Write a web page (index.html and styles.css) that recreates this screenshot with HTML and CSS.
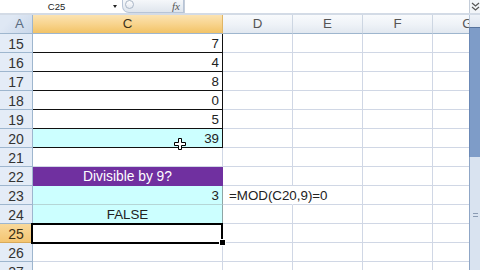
FILE: index.html
```html
<!DOCTYPE html>
<html>
<head>
<meta charset="utf-8">
<link rel="stylesheet" href="styles.css">
</head>
<body>
<div class="app">
  <div class="fbar">
    <div class="namebox"><span class="name">C25</span><span class="dd"></span></div>
    <div class="fxbox"><span class="knob"></span><span class="fx">fx</span></div>
    <div class="input"></div>
    <div class="expand">
      <svg width="9" height="10" viewBox="0 0 9 10"><polyline points="1,1 4.5,4 8,1" fill="none" stroke="#555" stroke-width="1.2"/><polyline points="1,5 4.5,8 8,5" fill="none" stroke="#555" stroke-width="1.2"/></svg>
    </div>
  </div>
  <div class="sheet">
    <div class="grid">
      <div class="corner">A</div><div class="ch sel">C</div><div class="ch">D</div><div class="ch">E</div><div class="ch">F</div><div class="ch">G</div>

      <div class="rh">15</div><div class="c cb num">7</div><div class="c"></div><div class="c"></div><div class="c"></div><div class="c"></div>
      <div class="rh">16</div><div class="c cb num">4</div><div class="c"></div><div class="c"></div><div class="c"></div><div class="c"></div>
      <div class="rh">17</div><div class="c cb num">8</div><div class="c"></div><div class="c"></div><div class="c"></div><div class="c"></div>
      <div class="rh">18</div><div class="c cb num">0</div><div class="c"></div><div class="c"></div><div class="c"></div><div class="c"></div>
      <div class="rh">19</div><div class="c cb num">5</div><div class="c"></div><div class="c"></div><div class="c"></div><div class="c"></div>
      <div class="rh">20</div><div class="c cb cyan num total">39<svg class="cursor" width="12" height="12" viewBox="0 0 12 12"><polygon points="4.5,0.5 7.5,0.5 7.5,4.5 11.5,4.5 11.5,7.5 7.5,7.5 7.5,11.5 4.5,11.5 4.5,7.5 0.5,7.5 0.5,4.5 4.5,4.5" fill="#fff" stroke="#000" stroke-width="1"/></svg></div><div class="c"></div><div class="c"></div><div class="c"></div><div class="c"></div>
      <div class="rh">21</div><div class="c"></div><div class="c"></div><div class="c"></div><div class="c"></div><div class="c"></div>
      <div class="rh">22</div><div class="c purple ctr">Divisible by 9?</div><div class="c"></div><div class="c"></div><div class="c"></div><div class="c"></div>
      <div class="rh">23</div><div class="c cyan cy num">3</div><div class="c ovf">=MOD(C20,9)=0</div><div class="c"></div><div class="c"></div><div class="c"></div>
      <div class="rh">24</div><div class="c cyan cy ctr">FALSE</div><div class="c"></div><div class="c"></div><div class="c"></div><div class="c"></div>
      <div class="rh sel">25</div><div class="c active"></div><div class="c"></div><div class="c"></div><div class="c"></div><div class="c"></div>
      <div class="rh">26</div><div class="c"></div><div class="c"></div><div class="c"></div><div class="c"></div><div class="c"></div>
      <div class="rh">27</div><div class="c"></div><div class="c"></div><div class="c"></div><div class="c"></div><div class="c"></div>
    </div>
    <div class="vscroll">
      <div class="vs-top"></div>
      <div class="vs-thumb"></div>
      <div class="vs-track"><span class="grip"></span></div>
    </div>
  </div>
</div>
</body>
</html>
```
FILE: styles.css
```css
* { box-sizing: border-box; margin: 0; padding: 0; }
html, body { width: 480px; height: 270px; overflow: hidden; background: #fff; }
body { font-family: "Liberation Sans", Arial, sans-serif; color: #222; }

.app { display: flex; flex-direction: column; height: 270px; }

/* formula bar */
.fbar { display: flex; height: 15px; flex: none; background: #fff; border-bottom: 2px solid #d3dbe6; }
.namebox { width: 119px; display: flex; align-items: center; font-size: 9.5px; color: #222; }
.name { flex: 1; text-align: center; line-height: 12px; }
.dd { width: 0; height: 0; margin: 0 2px 0 0; border-top: 3px solid #222; border-left: 2.5px solid transparent; border-right: 2.5px solid transparent; }
.fxbox { width: 62px; margin-left: 3px; height: 13px; display: flex; align-items: center; justify-content: space-between; padding: 0 3px 0 2px;
  border: 1px solid #b7c4d6; border-top: none; border-radius: 0 0 0 7px; background: linear-gradient(#f5f7fa, #dfe5ed); }
.knob { width: 9px; height: 9px; border-radius: 50%; border: 1px solid #a9b6c7; background: linear-gradient(#fdfdfe, #e4e9f0); margin-top: -3px; }
.fx { font-family: "Liberation Serif", serif; font-style: italic; font-size: 11px; color: #555; line-height: 12px; }
.input { flex: 1; border-left: 1px solid #c4cdd9; }
.expand { width: 11px; display: flex; align-items: center; justify-content: center; background: #f2f5f9; border-left: 1px solid #c4cdd9; }

/* sheet */
.sheet { flex: 1; display: flex; overflow: hidden; }
.grid { width: 469px; flex: none; display: grid; grid-template-columns: 33px 190px 70px 70px 70px 70px; grid-auto-rows: 19px; align-content: start; overflow: hidden; }

.corner, .ch, .rh, .c { font-size: 13.33px; white-space: nowrap; border-right: 1px solid #d0d7e5; border-bottom: 1px solid #d0d7e5; }

.corner { background: linear-gradient(135deg, #dfe8f4 0 30%, #c9d7ea 100%); border-right-color: #9eb6ce; border-bottom-color: #9eb6ce; color: #5a6b80; padding-left: 15px; line-height: 18px; }
.ch { background: linear-gradient(#f8fafc 0%, #eef2f7 55%, #e2e8f0 100%); border-right-color: #cdd6e2; border-bottom-color: #9eb6ce; text-align: center; line-height: 18px; color: #555; }
.ch.sel { background: linear-gradient(#fbe3b2 0%, #f8d48e 50%, #f2c366 100%); border-right-color: #e0b565; color: #3d321a; }

.rh { background: #e4ecf7; border-right-color: #9eb6ce; border-bottom-color: #9eb6ce; text-align: center; font-size: 14px; line-height: 16px; padding-top: 2px; color: #333; }
.rh.sel { background: linear-gradient(#f9d99b, #f4c572); border-bottom-color: #d9aa5a; color: #3b2f14; }

.c { line-height: 16px; padding: 2px 3px 0 3px; overflow: hidden; }
.num { text-align: right; }
.ctr { text-align: center; }
.cb { border-right-color: #111; border-bottom-color: #111; }
.cyan { background: #ccffff; }
.cy { border-right-color: #8fa5a5; border-bottom-color: #b5d6d6; }
.purple { background: #7030a0; color: #fff; border-right-color: #7030a0; border-bottom-color: #7030a0; font-size: 13.8px; }
.ovf { overflow: visible; border-right-color: transparent; position: relative; z-index: 1; padding-left: 6px; }

.total { position: relative; overflow: visible; }
.cursor { position: absolute; left: 141px; top: 9px; z-index: 3; }

.active { position: relative; overflow: visible; }
.active::before { content: ""; position: absolute; left: -2px; top: -1px; right: -1px; bottom: -2px; border: 2px solid #000; z-index: 2; }
.active::after { content: ""; position: absolute; right: -4px; bottom: -4px; width: 5px; height: 5px; background: #000; border: 1px solid #fff; z-index: 3; }

/* scrollbar */
.vscroll { width: 11px; flex: none; display: flex; flex-direction: column; }
.vs-top { height: 12px; background: linear-gradient(#eef2f8, #dde5f0); border-left: 1px solid #b9c8dc; }
.vs-thumb { height: 130px; background: #7e9cc8; border-left: 1px solid #6b89b6; border-top: 1px solid #57739d; }
.vs-track { flex: 1; background: #d9e3f0; border-left: 1px solid #8fa6c6; display: flex; justify-content: center; padding-top: 56px; }
.grip { width: 5px; height: 4px; border-top: 1px solid #8a9bb3; border-bottom: 1px solid #8a9bb3; }
```
